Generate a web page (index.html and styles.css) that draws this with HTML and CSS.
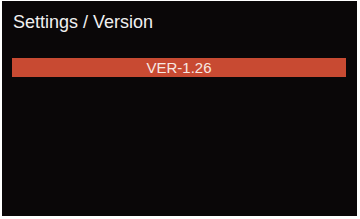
FILE: index.html
```html
<!DOCTYPE html>
<html lang="en">

<head>
	<meta charset="UTF-8">
	<title>Settings / Version</title>
	<link rel="stylesheet" href="styles.css">
</head>

<body>
	<div class="screen">
		<!-- 标题 -->
		<h3 class="title">Settings / Version</h3>
		<!-- 版本号 -->
		<div class="version">VER-1.26</div>
	</div>
</body>

</html>
```

FILE: styles.css
```css
body {
	margin: 0;
	padding: 0;
	background-color: #FFF;
	font-family: "Liberation Sans", Arial, sans-serif;
}

.screen {
	height: 215px;
	margin: 1px 3px 3px 2px;
	padding: 11px 11px 0 10px;
	box-sizing: border-box;
	background-color: #0A0708;
}

.title {
	margin: 0 0 0 1px;
	font-size: 18px;
	font-weight: normal;
	color: #F0F0F0;
}

.version {
	height: 19px;
	margin-top: 25px;
	line-height: 19px;
	font-size: 15px;
	text-align: center;
	color: #F7E8E2;
	background-color: #C84A32;
}
```
